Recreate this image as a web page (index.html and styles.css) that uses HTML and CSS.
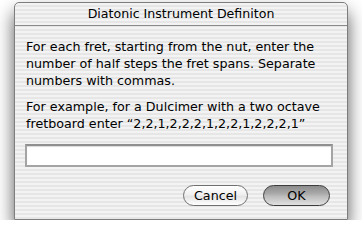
FILE: index.html
```html
<!DOCTYPE html>
<html>
<head>
<meta charset="utf-8">
<link rel="stylesheet" href="styles.css">
</head>
<body>
<div class="window">
  <div class="titlebar">Diatonic Instrument Definiton</div>
  <div class="content">
    <p class="msg">For each fret, starting from the nut, enter the<br>number of half steps the fret spans. Separate<br>numbers with commas.</p>
    <p class="msg last">For example, for a Dulcimer with a two octave<br>fretboard enter “2,2,1,2,2,2,1,2,2,1,2,2,2,1”</p>
    <div class="field"></div>
    <div class="buttons">
      <button class="btn cancel">Cancel</button>
      <button class="btn ok">OK</button>
    </div>
  </div>
</div>
</body>
</html>
```
FILE: styles.css
```css
html, body {
  margin: 0;
  padding: 0;
  background: #ffffff;
}
body {
  font-family: "DejaVu Sans", "Liberation Sans", sans-serif;
  color: #000;
}
.window {
  margin: 2px 0 0 14px;
  width: 334px;
  height: 218px;
  box-sizing: border-box;
  border: 1px solid #7d7d7d;
  border-radius: 5px 5px 0 0;
  background: repeating-linear-gradient(to bottom, #f3f3f3 0px, #f3f3f3 2px, #e6e6e6 2px, #e6e6e6 4px);
  box-shadow: 0 10px 18px rgba(0, 0, 0, 0.65);
  display: flex;
  flex-direction: column;
}
.titlebar {
  height: 22px;
  border-bottom: 1px solid #8a8a8a;
  font-size: 12.6px;
  line-height: 22px;
  text-align: center;
  border-radius: 5px 5px 0 0;
}
.content {
  padding: 12px 14px 0 11px;
  display: flex;
  flex-direction: column;
}
.msg {
  margin: 0 0 9px 0;
  font-size: 12.7px;
  line-height: 17px;
  white-space: nowrap;
}
.msg.last {
  margin-bottom: 12px;
}
.field {
  margin: 0 0 0 -1px;
  height: 19px;
  background: #fff;
  border: 2px solid #a4a4a4;
  border-top-color: #8f8f8f;
  box-shadow: inset 0 1px 1px rgba(0,0,0,0.15);
}
.buttons {
  display: flex;
  justify-content: flex-end;
  gap: 15px;
  margin-top: 18px;
  padding-right: 3px;
}
.btn {
  height: 21px;
  border-radius: 11px;
  font-family: "DejaVu Sans", "Liberation Sans", sans-serif;
  font-size: 12.7px;
  line-height: 17px;
  padding: 0;
  color: #000;
}
.cancel {
  width: 65px;
  border: 1px solid #6f6f6f;
  background: linear-gradient(to bottom, #ffffff 0%, #f0f0f0 45%, #e4e4e4 55%, #ffffff 100%);
}
.ok {
  width: 67px;
  border: 1px solid #3d3d3d;
  background: linear-gradient(to bottom, #8c8c8c 0%, #a9a9a9 40%, #bdbdbd 55%, #e0e0e0 100%);
}
```
